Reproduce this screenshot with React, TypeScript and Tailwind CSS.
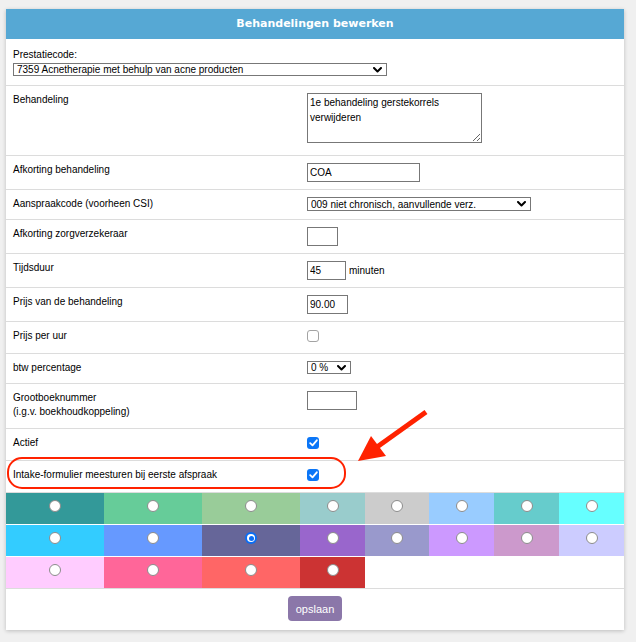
import React from "react";

const Chevron = () => (
  <svg width="9" height="6" viewBox="0 0 9 6" className="absolute right-[5px] top-1/2 -translate-y-1/2 pointer-events-none">
    <path d="M1 1 L4.5 4.5 L8 1" fill="none" stroke="#000" strokeWidth="2" strokeLinecap="round" strokeLinejoin="round" />
  </svg>
);

function FakeSelect({ w, h, value }: { w: string; h: string; value: string }) {
  return (
    <div className={`relative ${w} ${h}`}>
      <select
        defaultValue={value}
        className={`appearance-none block w-full h-full border border-[#777] bg-white text-black text-[10px] leading-[11px] pl-[3px] pr-[16px] py-0 rounded-none outline-none`}
      >
        <option value={value}>{value}</option>
      </select>
      <Chevron />
    </div>
  );
}

function Checkbox({ checked }: { checked: boolean }) {
  if (checked) {
    return (
      <div className="w-[12px] h-[12px] rounded-[3px] bg-[#0b76f7] flex items-center justify-center">
        <svg width="9" height="8" viewBox="0 0 9 8">
          <path d="M1.2 4.2 L3.5 6.4 L7.8 1.3" fill="none" stroke="#fff" strokeWidth="1.8" strokeLinecap="round" strokeLinejoin="round" />
        </svg>
      </div>
    );
  }
  return <div className="w-[12px] h-[12px] rounded-[3px] bg-white border border-[#a3a3a3]" />;
}

function Radio({ selected }: { selected?: boolean }) {
  if (selected) {
    return (
      <div className="w-[12px] h-[12px] rounded-full bg-[#0a6ef5] flex items-center justify-center">
        <div className="w-[8px] h-[8px] rounded-full bg-white flex items-center justify-center">
          <div className="w-[5px] h-[5px] rounded-full bg-[#0a6ef5]" />
        </div>
      </div>
    );
  }
  return <div className="w-[12px] h-[12px] rounded-full bg-white border border-[#8c8c8c]" />;
}

function Row({
  h,
  label,
  children,
  extra,
}: {
  h: string;
  label: React.ReactNode;
  children?: React.ReactNode;
  extra?: React.ReactNode;
}) {
  return (
    <div className={`relative flex ${h} border-b border-[#dcdcdc]`}>
      <div className="w-[294px] pl-[7px] pt-[7px]">{label}</div>
      <div className="flex-1 pl-[7px] pt-[7px]">{children}</div>
      {extra}
    </div>
  );
}

const inputCls =
  "block h-[19px] border border-[#777] bg-white text-black text-[10px] px-[2px] rounded-none outline-none";

const colorRows: { c: string; sel?: boolean }[][] = [
  [
    { c: "bg-[#339999]" },
    { c: "bg-[#66cc99]" },
    { c: "bg-[#99cc99]" },
    { c: "bg-[#99cccc]" },
    { c: "bg-[#cccccc]" },
    { c: "bg-[#99ccff]" },
    { c: "bg-[#66cccc]" },
    { c: "bg-[#66ffff]" },
  ],
  [
    { c: "bg-[#33ccff]" },
    { c: "bg-[#6699ff]" },
    { c: "bg-[#666699]", sel: true },
    { c: "bg-[#9966cc]" },
    { c: "bg-[#9999cc]" },
    { c: "bg-[#cc99ff]" },
    { c: "bg-[#cc99cc]" },
    { c: "bg-[#ccccff]" },
  ],
  [
    { c: "bg-[#ffccff]" },
    { c: "bg-[#ff6699]" },
    { c: "bg-[#ff6666]" },
    { c: "bg-[#cc3333]" },
  ],
];

export default function App() {
  return (
    <div
      className="relative w-[636px] min-h-[642px] bg-[#f0f0f0] pt-[9px] pl-[6px] text-black text-[10px] leading-[14px]"
      style={{ fontFamily: '"Liberation Sans", Arial, sans-serif' }}
    >
      <div className="w-[618px] bg-white shadow-[0_1px_4px_rgba(0,0,0,0.22)]">
        <div
          className="h-[30px] bg-[#56a8d4] flex items-center justify-center text-white font-bold text-[11px]"
          style={{ fontFamily: '"DejaVu Sans", Verdana, sans-serif' }}
        >
          Behandelingen bewerken
        </div>

        <div className="h-[47px] border-b border-[#dcdcdc] px-[7px] pt-[9px]">
          <div>Prestatiecode:</div>
          <div className="mt-[1px]">
            <FakeSelect w="w-[374px]" h="h-[13px]" value="7359 Acnetherapie met behulp van acne producten" />
          </div>
        </div>

        <Row h="h-[70px]" label="Behandeling">
          <textarea
            defaultValue={"1e behandeling gerstekorrels verwijderen"}
            className="block w-[175px] h-[50px] border border-[#777] bg-white text-black text-[10px] leading-[14.5px] px-[2px] pt-[2px] rounded-none outline-none"
            style={{ fontFamily: '"Liberation Sans", Arial, sans-serif' }}
          />
        </Row>

        <Row h="h-[34px]" label="Afkorting behandeling">
          <input defaultValue="COA" className={`${inputCls} w-[113px]`} />
        </Row>

        <Row h="h-[30px]" label="Aanspraakcode (voorheen CSI)">
          <FakeSelect w="w-[224px]" h="h-[14px]" value="009 niet chronisch, aanvullende verz." />
        </Row>

        <Row h="h-[34px]" label="Afkorting zorgverzekeraar">
          <input defaultValue="" className={`${inputCls} w-[31px]`} />
        </Row>

        <Row h="h-[34px]" label="Tijdsduur">
          <div className="flex items-center gap-[3px]">
            <input defaultValue="45" className={`${inputCls} w-[39px]`} />
            <span>minuten</span>
          </div>
        </Row>

        <Row h="h-[34px]" label="Prijs van de behandeling">
          <input defaultValue="90.00" className={`${inputCls} w-[41px]`} />
        </Row>

        <Row h="h-[32px]" label="Prijs per uur">
          <div className="pt-[1px]">
            <Checkbox checked={false} />
          </div>
        </Row>

        <Row h="h-[30px]" label="btw percentage">
          <FakeSelect w="w-[44px]" h="h-[13px]" value="0 %" />
        </Row>

        <Row
          h="h-[45px]"
          label={
            <>
              <div>Grootboeknummer</div>
              <div>(i.g.v. boekhoudkoppeling)</div>
            </>
          }
        >
          <input defaultValue="" className={`${inputCls} w-[50px]`} />
        </Row>

        <Row h="h-[32px]" label="Actief">
          <div className="pt-[1px]">
            <Checkbox checked />
          </div>
        </Row>

        <Row
          h="h-[32px]"
          label="Intake-formulier meesturen bij eerste afspraak"
          extra={
            <div className="absolute -top-[4px] left-[1px] w-[339px] h-[32px] border-2 border-[#ff2200] rounded-[15px] pointer-events-none" />
          }
        >
          <div className="pt-[1px]">
            <Checkbox checked />
          </div>
        </Row>

        <div>
          {colorRows.map((row, ri) => (
            <div
              key={ri}
              className={`grid grid-cols-[98px_98px_98px_65px_64px_65px_65px_65px] h-[32px] border-b ${
                ri === 2 ? "border-[#dcdcdc]" : "border-white"
              }`}
            >
              {row.map((cell, ci) => (
                <div key={ci} className={`${cell.c} flex justify-center pt-[7px]`}>
                  <Radio selected={cell.sel} />
                </div>
              ))}
            </div>
          ))}
        </div>

        <div className="h-[41px] flex justify-center pt-[7px]">
          <button className="h-[25px] w-[54px] rounded-[4px] bg-[#8b77a9] text-white text-[11px]">
            opslaan
          </button>
        </div>
      </div>

      <svg
        className="absolute left-0 top-0 pointer-events-none"
        width="636"
        height="642"
        viewBox="0 0 636 642"
      >
        <line x1="426" y1="412" x2="377" y2="447" stroke="#ff2200" strokeWidth="5" />
        <polygon points="358,461 371,436 386,456" fill="#ff2200" />
      </svg>
    </div>
  );
}
